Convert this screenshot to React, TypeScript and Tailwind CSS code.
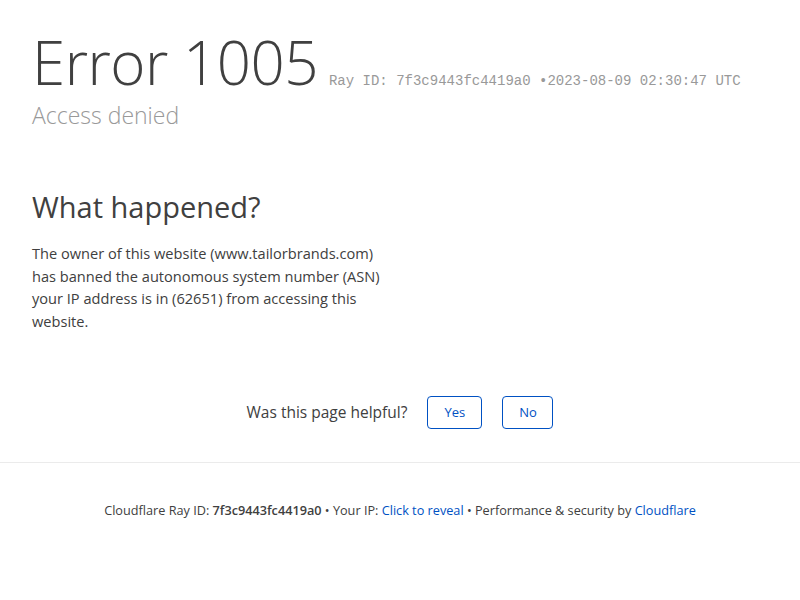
import React from "react";

export default function App() {
  return (
    <div
      className="w-[800px] h-[600px] bg-white text-[#404040] overflow-hidden"
      style={{ fontFamily: '"Open Sans", "Noto Sans", sans-serif' }}
    >
      <div className="px-8 pt-[40px]">
        <h1 className="flex items-baseline text-[60px] leading-[44px] font-light tracking-[-0.5px]">
          <span>Error 1005</span>
          <span
            className="ml-[11px] text-[14px] leading-[16px] text-[#999999] tracking-normal font-normal"
            style={{ fontFamily: '"Liberation Mono", monospace' }}
          >
            Ray ID: 7f3c9443fc4419a0 •2023-08-09 02:30:47 UTC
          </span>
        </h1>
        <h2 className="mt-[15px] text-[23px] leading-[22px] font-light text-[#999999]">Access denied</h2>
      </div>

      <div className="px-8 pt-[61px]">
        <h2 className="text-[29px] leading-[40px] font-normal">What happened?</h2>
        <p className="mt-[15px] w-[360px] text-[14.6px] leading-[22.5px]">
          The owner of this website (www.tailorbrands.com) has banned the autonomous system number (ASN) your IP address is in (62651) from accessing this website.
        </p>
      </div>

      <div className="mt-[64px] flex items-center justify-center">
        <span className="text-[15.5px] mr-[20px]">Was this page helpful?</span>
        <button className="w-[55px] h-[33px] border border-[#0051c3] rounded-[4px] text-[13px] text-[#0051c3]">Yes</button>
        <button className="ml-[20px] w-[51px] h-[33px] border border-[#0051c3] rounded-[4px] text-[13px] text-[#0051c3]">No</button>
      </div>

      <div className="mt-[33px] border-t border-[#ebebeb]" />

      <div className="pt-[38px] text-center text-[12.7px]">
        Cloudflare Ray ID: <strong className="font-semibold">7f3c9443fc4419a0</strong> • Your IP: <span className="text-[#0051c3]">Click to reveal</span> • Performance &amp; security by <span className="text-[#0051c3]">Cloudflare</span>
      </div>
    </div>
  );
}
